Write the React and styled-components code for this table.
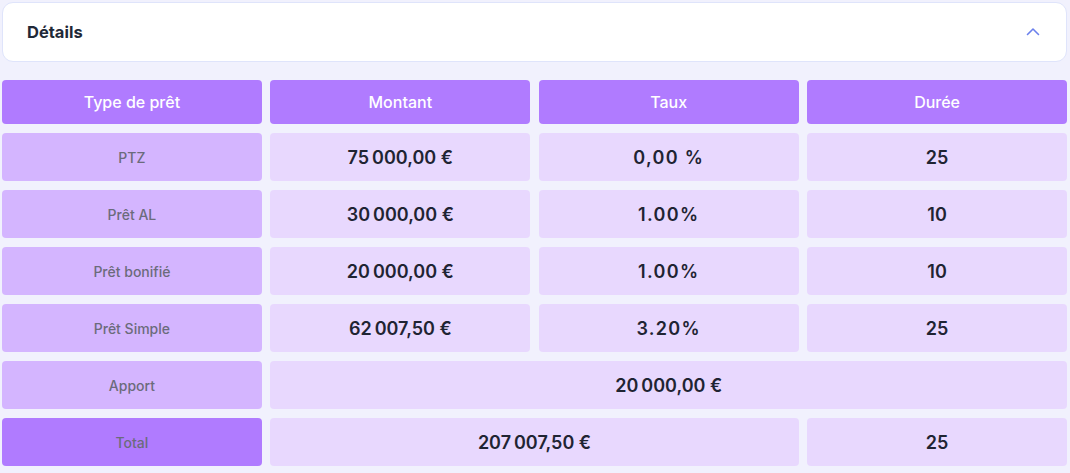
import React from 'react'
import styled, { createGlobalStyle } from 'styled-components'

const GlobalStyle = createGlobalStyle`
  html, body {
    margin: 0;
    padding: 0;
    background: #f1f1fd;
    font-family: Inter, "Noto Sans", sans-serif;
  }
  * { box-sizing: border-box; }
`

const Page = styled.div`
  padding: 2px 3px 0 2px;
  display: flex;
  flex-direction: column;
  gap: 18px;
`

const Panel = styled.div`
  height: 60px;
  background: #ffffff;
  border: 1.5px solid #dfe4fb;
  border-radius: 11px;
  display: flex;
  align-items: center;
  justify-content: space-between;
  padding: 0 25px 0 24px;
`

const Title = styled.h2`
  margin: 0;
  font-size: 16.5px;
  font-weight: 700;
  color: #1f2937;
`

const Grid = styled.div`
  display: grid;
  grid-template-columns: repeat(4, 1fr);
  grid-template-rows: 44px repeat(6, 48px);
  column-gap: 8.6px;
  row-gap: 9px;
`

const Cell = styled.div`
  display: flex;
  align-items: center;
  justify-content: center;
  border-radius: 4px;
  grid-column: ${p => p.$span ? `span ${p.$span}` : 'auto'};
`

const HeadCell = styled(Cell)`
  background: #b07bff;
  color: #ffffff;
  font-size: 16px;
  font-weight: 500;
`

const LabelCell = styled(Cell)`
  background: ${p => p.$total ? '#b07bff' : '#d4b5ff'};
  color: #6b6b7b;
  font-size: 14px;
  font-weight: 500;
`

const ValueCell = styled(Cell)`
  background: #e8d8fe;
  color: #1f2433;
  font-size: 18px;
  font-weight: 600;
  letter-spacing: ${p => p.$plain ? '0.2px' : '1.3px'};
`

const rows = [
  { label: 'PTZ', amount: '75\u202f000,00\u00a0€', rate: '0,00\u00a0%', years: '25' },
  { label: 'Prêt AL', amount: '30\u202f000,00\u00a0€', rate: '1.00%', years: '10' },
  { label: 'Prêt bonifié', amount: '20\u202f000,00\u00a0€', rate: '1.00%', years: '10' },
  { label: 'Prêt Simple', amount: '62\u202f007,50\u00a0€', rate: '3.20%', years: '25' }
]

function Chevron () {
  return (
    <svg width='16' height='16' viewBox='0 0 16 16' fill='none'>
      <path d='M2.5 10.5 L8 5 L13.5 10.5' stroke='#6b80ec' strokeWidth='1.6' strokeLinecap='round' strokeLinejoin='round' />
    </svg>
  )
}

export default function App () {
  return (
    <Page>
      <GlobalStyle />
      <Panel>
        <Title>Détails</Title>
        <Chevron />
      </Panel>
      <Grid>
        <HeadCell>Type de prêt</HeadCell>
        <HeadCell>Montant</HeadCell>
        <HeadCell>Taux</HeadCell>
        <HeadCell>Durée</HeadCell>
        {rows.map(r => (
          <React.Fragment key={r.label}>
            <LabelCell>{r.label}</LabelCell>
            <ValueCell>{r.amount}</ValueCell>
            <ValueCell>{r.rate}</ValueCell>
            <ValueCell $plain>{r.years}</ValueCell>
          </React.Fragment>
        ))}
        <LabelCell>Apport</LabelCell>
        <ValueCell $span={3}>20{'\u202f'}000,00{'\u00a0'}€</ValueCell>
        <LabelCell $total>Total</LabelCell>
        <ValueCell $span={2}>207{'\u202f'}007,50{'\u00a0'}€</ValueCell>
        <ValueCell $plain>25</ValueCell>
      </Grid>
    </Page>
  )
}
